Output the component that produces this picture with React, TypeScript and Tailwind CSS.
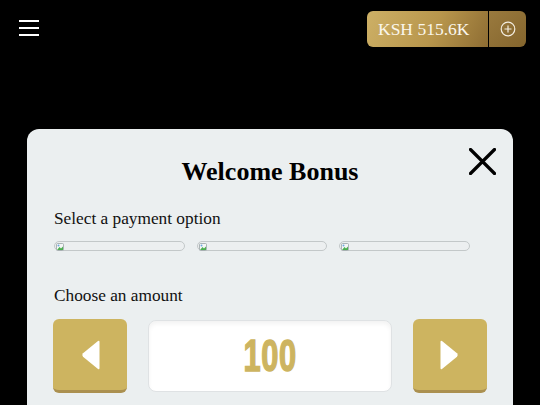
import React from "react";

function BrokenImg() {
  return (
    <div className="relative h-[10px] flex-1 rounded-full border border-[#c3c8c9] bg-[#eceff0]">
      <svg className="absolute left-[1px] top-[1px]" width="8" height="8" viewBox="0 0 8 8">
        <rect x="0.5" y="0.5" width="7" height="7" rx="1" fill="#f4f6f6" stroke="#9aa3a6" strokeWidth="0.8" />
        <path d="M1 7 L3.5 4 L5 5.5 L7 3.5 L7 7 Z" fill="#4caf50" />
        <circle cx="2.5" cy="2.5" r="1" fill="#6fa8dc" />
      </svg>
    </div>
  );
}

export default function App() {
  const serif = { fontFamily: '"Liberation Serif", "Times New Roman", serif' };
  return (
    <div className="h-[405px] w-full overflow-hidden bg-black" style={serif}>
      <div className="flex items-start justify-between pl-[19px] pr-[14px] pt-[11px]">
        <div className="mt-[9px] flex flex-col gap-[5px]">
          <div className="h-[2px] w-[20px] bg-white" />
          <div className="h-[2px] w-[20px] bg-white" />
          <div className="h-[2px] w-[20px] bg-white" />
        </div>
        <div className="flex h-[36px]">
          <div className="flex w-[121px] items-center rounded-l-[6px] bg-[linear-gradient(115deg,#cdb066_0%,#b8964c_55%,#8e6d33_100%)] pl-[11px] pt-[1px] text-[17.5px] text-[#faf6ec]">
            KSH 515.6K
          </div>
          <div className="w-[1px] bg-black" />
          <div className="flex w-[37px] items-center justify-center rounded-r-[6px] bg-[linear-gradient(135deg,#9a7a3e,#84652d)]">
            <svg width="16" height="16" viewBox="0 0 16 16" fill="none" stroke="#f3ede0" strokeWidth="1.2">
              <circle cx="8" cy="8" r="6.8" />
              <path d="M8 4.5 V11.5 M4.5 8 H11.5" />
            </svg>
          </div>
        </div>
      </div>

      <div className="relative mx-[27px] mt-[82px] h-[400px] rounded-[12px] bg-[#ebeff0] px-[27px] pt-[28px]">
        <svg className="absolute right-[17px] top-[19px]" width="27" height="27" viewBox="0 0 27 27" stroke="#000" strokeWidth="3.2" strokeLinecap="round">
          <path d="M1.5 1.5 L25.5 25.5 M25.5 1.5 L1.5 25.5" />
        </svg>
        <h2 className="text-center text-[26px] font-bold leading-[30px] text-black">Welcome Bonus</h2>
        <p className="mt-[22px] text-[17.3px] leading-[20px] text-[#111]">Select a payment option</p>
        <div className="mt-[12px] flex gap-[12px] pr-[16px]">
          <BrokenImg />
          <BrokenImg />
          <BrokenImg />
        </div>
        <p className="mt-[35px] text-[17.3px] leading-[20px] text-[#111]">Choose an amount</p>
        <div className="-mx-[1px] mt-[13px] flex items-start gap-[21px]">
          <div className="flex h-[74px] w-[74px] items-center justify-center rounded-[6px] border-b-[3px] border-[#ab9050] bg-[#cdb460]">
            <svg width="22" height="34" viewBox="0 0 22 34">
              <path d="M19 3 L4 15.2 Q2.5 17 4 18.8 L19 31 Q20.5 32 20.5 30 L20.5 4 Q20.5 2 19 3 Z" fill="#fff" />
            </svg>
          </div>
          <div className="mt-[1px] flex h-[72px] flex-1 items-center justify-center rounded-[8px] border border-[#dfe2e4] bg-white shadow-[inset_0_3px_4px_rgba(0,0,0,0.05)]">
            <span
              className="inline-block scale-x-[0.7] text-[44px] font-bold leading-none tracking-[1px] text-[#cdb460]"
              style={{ fontFamily: '"Liberation Sans", Arial, sans-serif', WebkitTextStroke: "1.5px #cdb460" }}
            >
              100
            </span>
          </div>
          <div className="flex h-[74px] w-[74px] items-center justify-center rounded-[6px] border-b-[3px] border-[#ab9050] bg-[#cdb460]">
            <svg width="22" height="34" viewBox="0 0 22 34">
              <path d="M3 3 L18 15.2 Q19.5 17 18 18.8 L3 31 Q1.5 32 1.5 30 L1.5 4 Q1.5 2 3 3 Z" fill="#fff" />
            </svg>
          </div>
        </div>
      </div>
    </div>
  );
}
